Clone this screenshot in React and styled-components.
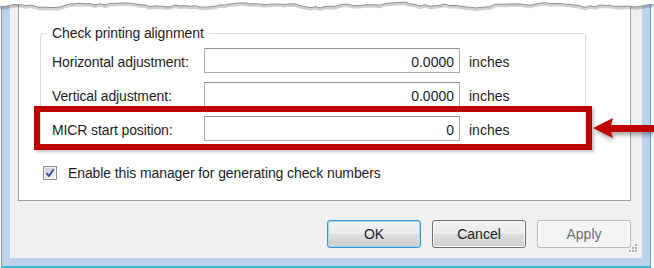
import React from "react"
import styled, { createGlobalStyle } from "styled-components"

const GlobalStyle = createGlobalStyle`
  html, body {
    margin: 0;
    padding: 0;
    background: #fff;
  }
  * {
    box-sizing: border-box;
  }
`

const Screen = styled.div`
  position: relative;
  width: 654px;
  height: 268px;
  overflow: hidden;
  display: flex;
  background: #fff;
  font-family: "Liberation Sans", Arial, sans-serif;
  font-size: 14px;
  color: #1e1e1e;
`

const Window = styled.div`
  flex: 1;
  display: flex;
  margin: 0 3px 0 1px;
  padding: 0 8px 8px 8px;
  background: #bbd3eb;
  border-left: 1px solid #8d9aa7;
  border-right: 1px solid #5ea9d6;
  border-bottom: 2px solid #3fb4d2;
`

const Client = styled.div`
  position: relative;
  flex: 1;
  display: flex;
  flex-direction: column;
  padding: 0 11px 0 7px;
  background: #f0f0f0;
  border-left: 1px solid #fbfbfb;
`

const Panel = styled.div`
  flex: none;
  height: 201px;
  padding-left: 21px;
  background: #fff;
  border: 1px solid #a0a0a0;
  border-top: none;
`

const GroupBox = styled.fieldset`
  width: 546px;
  margin: 25px 0 0 0;
  padding: 0;
  border: 1px solid #d5dfe5;
  border-radius: 3px;
  min-inline-size: auto;
`

const Legend = styled.legend`
  margin-left: 6px;
  padding: 0 5px;
  line-height: 16px;
  letter-spacing: -0.1px;
`

const Rows = styled.div`
  display: flex;
  flex-direction: column;
  gap: 9px;
  padding: 7px 0 5px 11px;
`

const Row = styled.div`
  display: flex;
  align-items: center;
  height: 25px;
`

const Label = styled.span`
  width: 152px;
  padding-top: 3px;
  white-space: nowrap;
  letter-spacing: -0.12px;
`

const Field = styled.div`
  width: 256px;
  height: 25px;
  display: flex;
  align-items: center;
  justify-content: flex-end;
  padding: 3px 5px 0 0;
  background: #fff;
  border: 1px solid #a9abaf;
  border-top-color: #8e9196;
`

const Unit = styled.span`
  margin-left: 9px;
  padding-top: 3px;
`

const CheckRow = styled.label`
  display: flex;
  align-items: center;
  gap: 11px;
  margin: 18px 0 0 3px;
  letter-spacing: -0.1px;
`

const Box = styled.span`
  width: 14px;
  height: 14px;
  display: flex;
  align-items: center;
  justify-content: center;
  border: 1px solid #8e8f8f;
  background: linear-gradient(135deg, #c5c9cf 0%, #e6e8eb 55%, #f7f7f7 100%);
  box-shadow: inset 0 0 0 1px #f4f4f4;
`

const ButtonBar = styled.div`
  display: flex;
  justify-content: flex-end;
  gap: 11px;
  margin-top: 19px;
`

const Button = styled.button`
  width: 94px;
  height: 28px;
  padding: 0;
  font-family: inherit;
  font-size: 14px;
  border-radius: 3px;
  color: ${p => (p.$disabled ? "#6c7078" : "#1e1e1e")};
  border: 1px solid
    ${p => (p.$focused ? "#3c93d2" : p.$disabled ? "#b5b9bd" : "#707070")};
  background: ${p =>
    p.$disabled
      ? "#f4f4f4"
      : "linear-gradient(#f2f2f2 0%, #ebebeb 48%, #dddddd 52%, #cfcfcf 100%)"};
  box-shadow: ${p =>
    p.$focused ? "inset 0 0 0 1px #9fdaf6" : "inset 0 0 0 1px #fcfcfc"};
`

const Grip = styled.svg`
  position: absolute;
  right: 4px;
  bottom: 5px;
`

const Highlight = styled.div`
  position: absolute;
  left: 34px;
  top: 106px;
  width: 558px;
  height: 44px;
  border: 6px solid #c00000;
  box-shadow: 2px 2px 3px rgba(0, 0, 0, 0.25);
`

const Arrow = styled.svg`
  position: absolute;
  left: 592px;
  top: 114px;
  filter: drop-shadow(1px 3px 2px rgba(0, 0, 0, 0.35));
`

const Tear = styled.svg`
  position: absolute;
  left: 0;
  top: 0;
`

const wave = (() => {
  const pts = []
  let seed = 11
  const rnd = () => {
    seed = (seed * 9301 + 49297) % 233280
    return seed / 233280
  }
  for (let x = 0; x <= 660; x += 5) {
    const y =
      5 + 1.5 * Math.sin(x / 23) + 1.1 * Math.sin(x / 8.5 + 2) + (rnd() - 0.5) * 1.8
    pts.push(`${x},${y.toFixed(1)}`)
  }
  return pts
})()

const edge = "M" + wave.join(" L")
const tearFill = "M0,0 L" + wave.join(" L") + " L660,0 Z"

const adjustments = [
  { label: "Horizontal adjustment:", value: "0.0000" },
  { label: "Vertical adjustment:", value: "0.0000" },
  { label: "MICR start position:", value: "0" },
]

const App = () => {
  return (
    <Screen>
      <GlobalStyle />
      <Window>
        <Client>
          <Panel>
            <GroupBox>
              <Legend>Check printing alignment</Legend>
              <Rows>
                {adjustments.map(a => (
                  <Row key={a.label}>
                    <Label>{a.label}</Label>
                    <Field>{a.value}</Field>
                    <Unit>inches</Unit>
                  </Row>
                ))}
              </Rows>
            </GroupBox>
            <CheckRow>
              <Box>
                <svg width="10" height="10" viewBox="0 0 10 10">
                  <path
                    d="M1.5 5.2 L4 8 L8.6 1.2"
                    fill="none"
                    stroke="#33509c"
                    strokeWidth="1.9"
                  />
                </svg>
              </Box>
              Enable this manager for generating check numbers
            </CheckRow>
          </Panel>
          <ButtonBar>
            <Button $focused>OK</Button>
            <Button>Cancel</Button>
            <Button $disabled>Apply</Button>
          </ButtonBar>
          <Grip width="9" height="9" viewBox="0 0 9 9">
            {[
              [6, 0],
              [3, 3],
              [6, 3],
              [0, 6],
              [3, 6],
              [6, 6],
            ].map(([x, y]) => (
              <g key={`${x}-${y}`}>
                <rect x={x + 1} y={y + 1} width="2" height="2" fill="#fff" />
                <rect x={x} y={y} width="2" height="2" fill="#b3b3b3" />
              </g>
            ))}
          </Grip>
        </Client>
      </Window>
      <Highlight />
      <Arrow width="62" height="28" viewBox="0 0 62 28">
        <polygon
          points="1,14 21,4 19,11 62,11 62,18 19,18 21,24"
          fill="#c00000"
        />
      </Arrow>
      <Tear width="654" height="16" viewBox="0 0 654 16">
        <path d={edge} fill="none" stroke="rgba(0,0,0,0.18)" strokeWidth="3" transform="translate(0 1.5)" />
        <path d={tearFill} fill="#fff" />
        <path d={edge} fill="none" stroke="#8f8f8f" strokeWidth="1" />
      </Tear>
    </Screen>
  )
}

export default App
